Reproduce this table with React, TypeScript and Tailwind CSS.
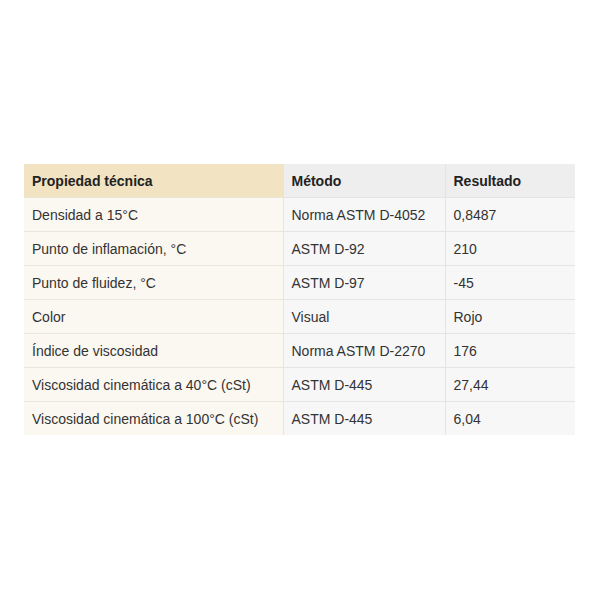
const rows = [
  ["Densidad a 15°C", "Norma ASTM D-4052", "0,8487"],
  ["Punto de inflamación, °C", "ASTM D-92", "210"],
  ["Punto de fluidez, °C", "ASTM D-97", "-45"],
  ["Color", "Visual", "Rojo"],
  ["Índice de viscosidad", "Norma ASTM D-2270", "176"],
  ["Viscosidad cinemática a 40°C (cSt)", "ASTM D-445", "27,44"],
  ["Viscosidad cinemática a 100°C (cSt)", "ASTM D-445", "6,04"],
];

export default function App() {
  return (
    <div className="w-[600px] h-[600px] bg-white pt-[164px] pl-[24px] font-['Liberation_Sans',Arial,sans-serif] text-[14px]">
      <table className="w-[551px] border-collapse text-left">
        <thead>
          <tr className="h-[33px]">
            <th className="w-[259px] bg-[#f2e4c3] px-2 pt-[3px] font-bold text-[#222] border-r border-[#e4e4e4]">Propiedad técnica</th>
            <th className="w-[162px] bg-[#eeeeee] px-2 pt-[3px] font-bold text-[#222] border-r border-[#e4e4e4]">Método</th>
            <th className="bg-[#eeeeee] px-2 pt-[3px] font-bold text-[#222]">Resultado</th>
          </tr>
        </thead>
        <tbody>
          {rows.map((r, i) => (
            <tr key={i} className="h-[34px]">
              <td className="bg-[#fbf8f1] px-2 pt-[3px] text-[#333] border-t border-r border-[#ebe6dc]">{r[0]}</td>
              <td className="bg-[#f7f7f7] px-2 pt-[3px] text-[#333] border-t border-r border-[#e4e4e4]">{r[1]}</td>
              <td className="bg-[#f7f7f7] px-2 pt-[3px] text-[#333] border-t border-[#e4e4e4]">{r[2]}</td>
            </tr>
          ))}
        </tbody>
      </table>
    </div>
  );
}
